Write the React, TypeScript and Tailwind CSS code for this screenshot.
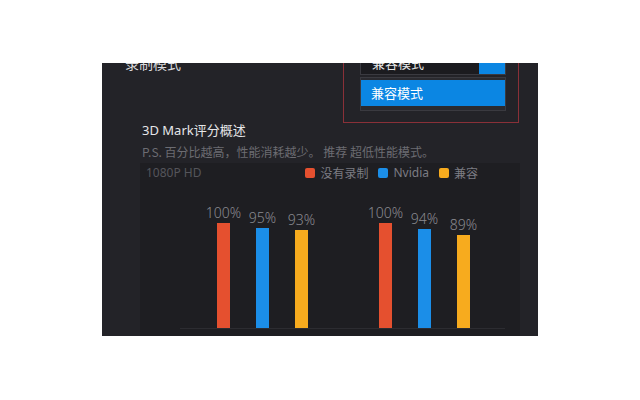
import React from "react";

const groups = [
  [
    { v: 100, c: "bg-[#e5502f]" },
    { v: 95, c: "bg-[#1b8ee8]" },
    { v: 93, c: "bg-[#f7ab1e]" },
  ],
  [
    { v: 100, c: "bg-[#e5502f]" },
    { v: 94, c: "bg-[#1b8ee8]" },
    { v: 89, c: "bg-[#f7ab1e]" },
  ],
];

const cjk = "font-['Microsoft_YaHei','Noto_Sans_CJK_SC',sans-serif]";

export default function App() {
  return (
    <div className={`w-[640px] h-[400px] bg-white overflow-hidden ${cjk}`}>
      <div className="ml-[102px] mt-[63px] w-[436px] h-[273px] bg-[#232328] overflow-hidden">
        {/* top row */}
        <div className="mt-[-12px] h-[24px] flex items-center pl-[23px]">
          <span className="text-[14px] leading-[18px] text-[#d9d9dc]">录制模式</span>
          <div className="relative ml-auto mr-[32px] w-[146px] h-[24px] flex border border-[#3a3a40] bg-[#1b1b1f]">
            <div className="flex-1 flex items-center pl-[11px] text-[13px] text-[#e8e8e8]">兼容模式</div>
            <div className="w-[26px] bg-[#0b86e3]" />
            {/* red annotation outline */}
            <div className="absolute left-[-18px] right-[-14px] top-[-30px] bottom-[-49px] border border-[#8a3038] pointer-events-none" />
            {/* dropdown menu */}
            <div className="absolute left-[-1px] right-[-1px] top-full mt-[3px] h-[34px] border border-[#3a3a40] bg-[#2a2a2f] pt-[2px]">
              <div className="h-[26px] bg-[#0b86e3] flex items-center pl-[10px] text-[13px] text-white">兼容模式</div>
            </div>
          </div>
        </div>

        {/* title */}
        <div className="pl-[40px] mt-[46px] text-[13px] leading-[18px] text-[#e6e6e8]">
          <span className="font-['Noto_Sans','Noto_Sans_CJK_SC',sans-serif]">3D Mark</span>评分概述
        </div>
        <div className="pl-[40px] mt-[5px] text-[12px] leading-[16px] text-[#6c6c72] whitespace-nowrap">
          P.S. 百分比越高，性能消耗越少。 推荐 超低性能模式。
        </div>

        {/* chart */}
        <div className="mt-[3px] ml-[38px] w-[380px] h-[200px] bg-[#1e1e22]">
          <div className="h-[20px] flex items-center justify-between pl-[6px] pr-[42px] text-[12px]">
            <span className="font-['Noto_Sans',sans-serif] text-[#55555b]">1080P HD</span>
            <div className="flex items-center text-[#7c7c82]">
              <span className="w-[10px] h-[10px] rounded-[2px] bg-[#e5502f]" />
              <span className="ml-[5px]">没有录制</span>
              <span className="ml-[10px] w-[10px] h-[10px] rounded-[2px] bg-[#1b8ee8]" />
              <span className="ml-[5px] font-['Noto_Sans',sans-serif]">Nvidia</span>
              <span className="ml-[10px] w-[10px] h-[10px] rounded-[2px] bg-[#f7ab1e]" />
              <span className="ml-[5px]">兼容</span>
            </div>
          </div>
          <div className="ml-[40px] w-[325px] h-[146px] border-b border-[#2c2c31] flex items-end">
            {groups.map((g, gi) => (
              <div key={gi} className="w-[162px] flex items-end pl-[37px] gap-[26px]">
                {g.map((b, bi) => (
                  <div key={bi} className="w-[13px] flex flex-col items-center">
                    <span className="mb-[2px] whitespace-nowrap text-[14px] leading-[16px] font-light text-[#8a8a90] font-['Noto_Sans',sans-serif]">
                      {b.v}%
                    </span>
                    <div className={`w-[13px] ${b.c}`} style={{ height: `${(105 * b.v) / 100}px` }} />
                  </div>
                ))}
              </div>
            ))}
          </div>
        </div>
      </div>
    </div>
  );
}
